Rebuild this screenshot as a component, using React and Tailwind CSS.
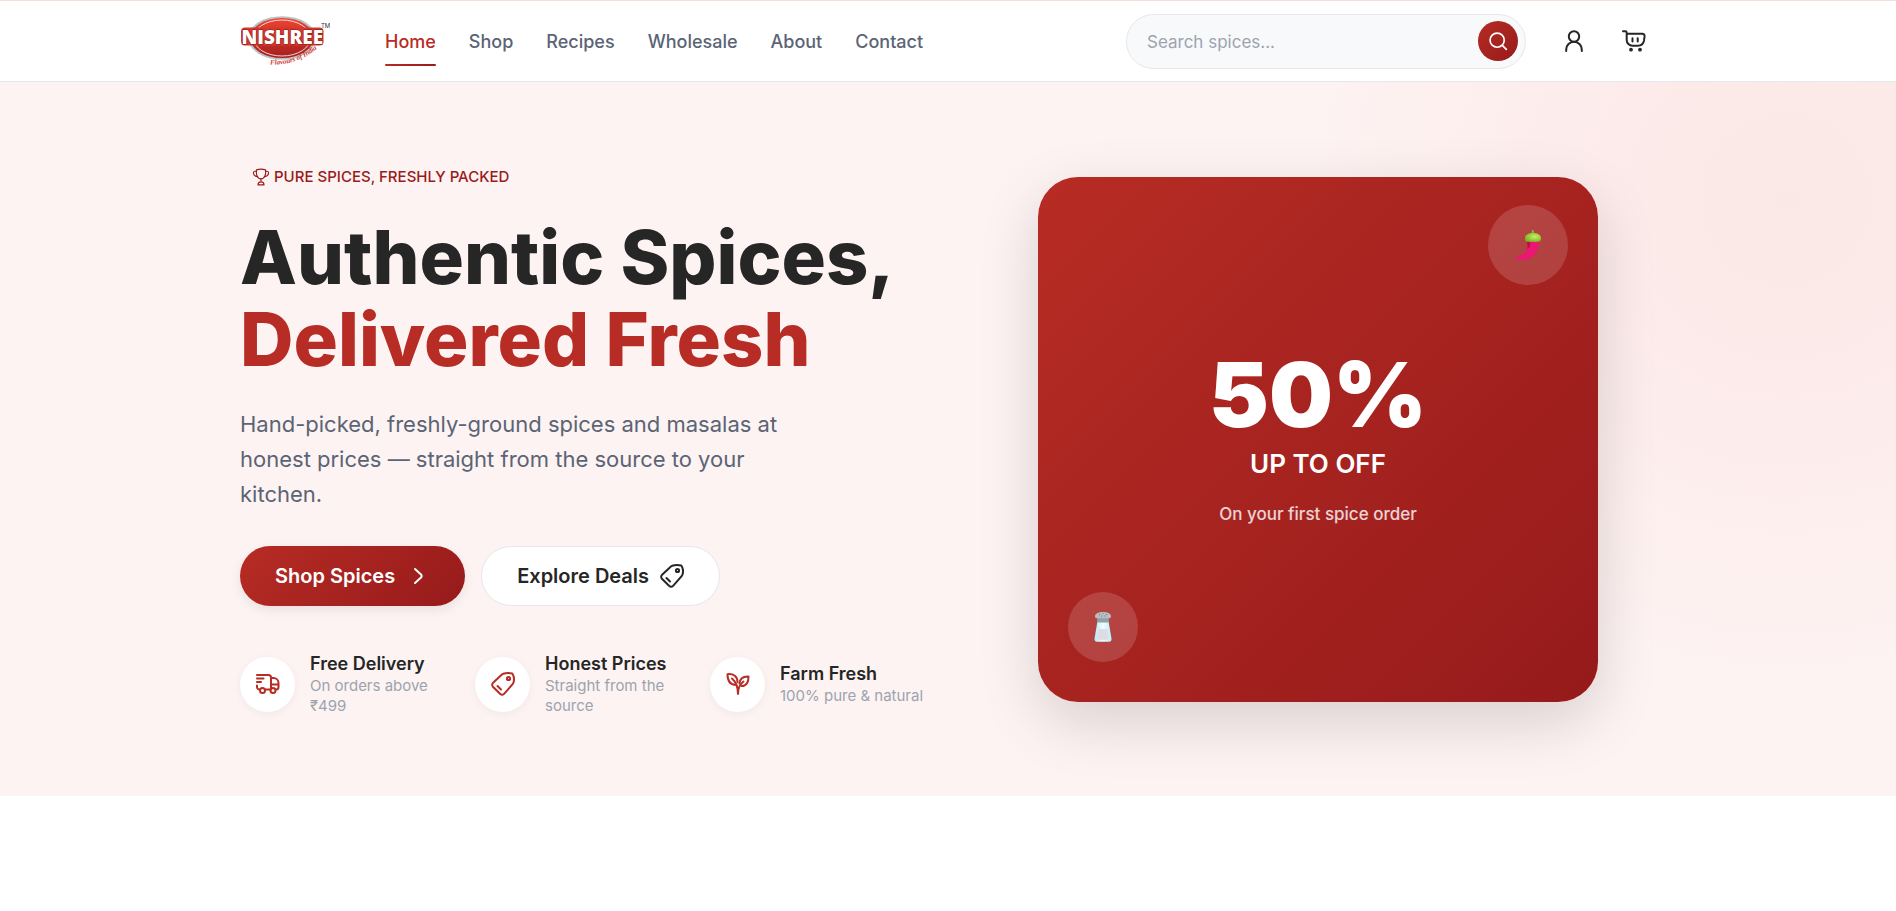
const NAV = ["Home", "Shop", "Recipes", "Wholesale", "About", "Contact"];

function Icon({ children, className, strokeWidth = 2 }) {
  return (
    <svg
      viewBox="0 0 24 24"
      fill="none"
      stroke="currentColor"
      strokeWidth={strokeWidth}
      strokeLinecap="round"
      strokeLinejoin="round"
      className={className}
      aria-hidden="true"
    >
      {children}
    </svg>
  );
}

const TruckIcon = (p) => (
  <Icon {...p}>
    <path d="M1 3h11.500A2.500 2.500 0 0 1 15 5.500V17.500H9.500" />
    <path d="M1 6.500h6.500M1 10h4M1 13.500v1.500a2.500 2.500 0 0 0 2.500 2.500" />
    <path d="M15 6h2.500A5 5 0 0 1 22.500 11v4a2.500 2.500 0 0 1-2.500 2.500M15 12.500h7.500" />
    <circle cx="6.500" cy="18.500" r="2.500" />
    <circle cx="17" cy="18.500" r="2.500" />
  </Icon>
);

const TagIcon = (p) => (
  <Icon {...p}>
    <path d="M12.300 1.800C15 .8 19 1 21.300 1.500 23 4 23.300 8 22.500 10.500c-.2.800-.6 1.300-1.100 1.900L13.300 21.700a2.800 2.800 0 0 1-4 .3L1.900 14.700a2.800 2.800 0 0 1 .2-4L10.400 2.900c.6-.5 1.100-.9 1.900-1.100Z" />
    <circle cx="17.500" cy="6.500" r="1.600" />
    <path d="m6.500 14 3.500 3.500" />
  </Icon>
);

const SproutIcon = (p) => (
  <Icon {...p}>
    <path d="M9.800 12.800C4.500 12.800 1.500 9 1.500 2.200c6-.6 10 2 10 8" />
    <path d="M13.500 11.500c.3-4.500 3.500-7.200 9-7 .2 5.500-2.200 9.500-6.800 9.500" />
    <path d="M6 6.500c3.500 3 6 7 6 15.500 0-5.500 2-10 5.500-12.500" />
  </Icon>
);

const TrophyIcon = (p) => (
  <Icon {...p}>
    <path d="M6 2.500c3-1 9-1 12 0 .8 5-.5 12-6 12s-6.800-7-6-12Z" />
    <path d="M5.800 4.500C3 4 1.500 5 2 7.500c.4 2 2 3.500 5 4M18.200 4.500C21 4 22.500 5 22 7.500c-.4 2-2 3.500-5 4" />
    <path d="M12 14.500v4M8 22.500c0-2.500 1.500-4 4-4s4 1.500 4 4Z" />
  </Icon>
);

const UserIcon = (p) => (
  <Icon {...p}>
    <circle cx="12" cy="7.500" r="5.200" />
    <path d="M4.200 22v-1.500a7.800 7.800 0 0 1 15.600 0V22" />
  </Icon>
);

const CartIcon = (p) => (
  <Icon {...p}>
    <path d="M1 2.300h2.300a1.400 1.400 0 0 1 1.400 1.400V11a5.700 5.700 0 0 0 5.700 5.700h5.300c3.500 0 5.800-1.900 6.300-5l.6-4.500A2.200 2.200 0 0 0 20.400 4.800H4.800" />
    <path d="M10.500 9.300v3.200M15.700 9.300v3.200" />
    <circle cx="9" cy="20.700" r="0.900" fill="currentColor" />
    <circle cx="18" cy="20.700" r="0.900" fill="currentColor" />
  </Icon>
);

const SearchIcon = (p) => (
  <Icon {...p}>
    <circle cx="11" cy="11" r="8.500" />
    <path d="m17.500 17.500 4.500 4.500" />
  </Icon>
);

const ChevronIcon = (p) => (
  <Icon {...p}>
    <path d="m9 5 6 5.500a2 2 0 0 1 0 3L9 19" />
  </Icon>
);

function ChiliIcon({ className }) {
  return (
    <svg viewBox="0 0 25 30" className={className} aria-hidden="true">
      <defs>
        <radialGradient id="cap" cx="0.600" cy="0.400" r="0.600">
          <stop offset="0" stopColor="#c4f266" />
          <stop offset="1" stopColor="#7fb524" />
        </radialGradient>
      </defs>
      <path
        d="M10.500 10.500h12.300c.3 6-1.300 11.500-5.300 15.300C13.500 29.500 7.500 30.300 2 29.300.2 28.900-.1 26 2 25.700 7.500 25.300 11.300 22 11.300 16c0-2-.5-3.800-.8-5.500Z"
        fill="#ec1675"
      />
      <path d="M10.500 11h3.800c.4 3.500-.5 6.300-2.800 8.200.4-3.200-.1-5.600-1-8.200Z" fill="#b5123f" />
      <rect x="15.800" y="0" width="2" height="6" rx="0.800" fill="#86bd2b" />
      <path d="M9 8c0-3 3-5 8-5s8 2 8 5-1 4-3 3.700c-1.500-.3-2 .5-3 .3-1.200-.2-2.500-.2-4 0-1 .2-1.500-.6-3-.3-2 .3-3-.7-3-3.700Z" fill="url(#cap)" />
    </svg>
  );
}

function SaltIcon({ className }) {
  return (
    <svg viewBox="0 0 18 30" className={className} aria-hidden="true">
      <defs>
        <linearGradient id="glass" x1="0" y1="0" x2="1" y2="0">
          <stop offset="0" stopColor="#b3e8f8" />
          <stop offset="0.500" stopColor="#f1fcff" />
          <stop offset="1" stopColor="#b9ecfa" />
        </linearGradient>
      </defs>
      <path d="M3.500 9h11l3 17.500c.3 2-.8 3.300-2.500 3.300H3C1.300 29.800.2 28.500.5 26.500Z" fill="url(#glass)" />
      <path d="M4.500 17h9l1 9c0 1-.5 1.700-1.500 1.700H5c-1 0-1.500-.7-1.500-1.700Z" fill="#dcdce2" />
      <rect x="3.200" y="5" width="11.600" height="5.500" rx="1" fill="#8fa1ab" />
      <path d="M1 4.500C1 1.500 4 0 9 0s8 1.500 8 4.500c0 1.300-1 1.800-2.500 1.800h-11C2 6.300 1 5.800 1 4.500Z" fill="#b9bcc0" />
      <path d="M5 2.500h1M8.500 1.500h1M12 2.500h1M7 4h1M10.500 4h1" stroke="#6f7377" strokeWidth="0.900" />
    </svg>
  );
}

function Logo() {
  return (
    <svg viewBox="0 0 90 54" className="h-[54px] w-[90px]" role="img" aria-label="Nishree, Flavours of India">
      <defs>
        <linearGradient id="oval" x1="0" y1="0" x2="0" y2="1">
          <stop offset="0" stopColor="#ee4332" />
          <stop offset="1" stopColor="#a51f1f" />
        </linearGradient>
        <path id="arc" d="M30 50.500Q58 52 80 32" />
      </defs>
      <ellipse cx="42" cy="24" rx="34" ry="21.800" fill="#b9c2c6" />
      <ellipse cx="42" cy="24" rx="31.500" ry="20" fill="url(#oval)" />
      <ellipse cx="42" cy="24" rx="28.500" ry="18" fill="none" stroke="#fff" strokeWidth="0.800" />
      <rect x="1" y="13.500" width="82.500" height="18" rx="4" fill="#d5372b" />
      <text
        x="42.300"
        y="29.500"
        textAnchor="middle"
        fontFamily="'Open Sans', sans-serif"
        fontWeight="800"
        fontSize="19"
        fill="#fff"
        stroke="#7c1b18"
        strokeWidth="1"
        paintOrder="stroke"
      >
        NISHREE
      </text>
      <text x="81" y="13.500" fontFamily="Inter, sans-serif" fontSize="6" fill="#333">
        TM
      </text>
      <text fontFamily="'Liberation Serif', serif" fontStyle="italic" fontWeight="700" fontSize="7" fill="#d2352b">
        <textPath href="#arc">Flavours of India</textPath>
      </text>
    </svg>
  );
}

function Header() {
  return (
    <header className="border-t border-b border-t-[#f8ddd8] border-b-[#e5e7eb] bg-white">
      <div className="mx-auto flex h-20 max-w-[1440px] items-center px-3">
        <a href="#home" className="mr-[55px] block">
          <Logo />
        </a>
        <nav className="flex items-center gap-[33px]">
          {NAV.map((n, i) => (
            <a
              key={n}
              href="#"
              className={
                i === 0
                  ? "relative pt-3.5 pb-3 text-[18px] leading-6 font-medium text-[#b72c24]"
                  : "pt-3.5 pb-3 text-[18px] leading-6 font-medium text-[#5b6475]"
              }
            >
              {n}
              {i === 0 && (
                <span className="absolute inset-x-0 bottom-0 h-0.5 rounded-full bg-linear-to-r from-[#b72c24] to-[#991b1b]" />
              )}
            </a>
          ))}
        </nav>
        <form
          className="ml-auto flex h-[55px] w-[400px] items-center rounded-full border border-[#e5e7eb] bg-[#f8f9fb] pr-[7px] pl-5"
          onSubmit={(e) => e.preventDefault()}
        >
          <input
            type="search"
            aria-label="Search spices"
            placeholder="Search spices..."
            className="min-w-0 flex-1 bg-transparent pt-0.5 text-[17px] leading-6 outline-none placeholder:text-[#9ca3af]"
          />
          <button
            type="submit"
            aria-label="Search"
            className="flex size-10 items-center justify-center rounded-full bg-linear-135 from-[#b72c24] to-[#961a1b] text-white"
          >
            <SearchIcon className="size-5" />
          </button>
        </form>
        <div className="ml-[26px] flex gap-4 text-[#262626]">
          <button type="button" aria-label="Account" className="flex size-11 items-center justify-center">
            <UserIcon className="size-6" />
          </button>
          <button type="button" aria-label="Cart" className="flex size-11 items-center justify-center">
            <CartIcon className="size-6" />
          </button>
        </div>
      </div>
    </header>
  );
}

const BENEFITS = [
  { icon: TruckIcon, title: "Free Delivery", text: "On orders above ₹499" },
  { icon: TagIcon, title: "Honest Prices", text: "Straight from the source" },
  { icon: SproutIcon, title: "Farm Fresh", text: "100% pure & natural" },
];

function Hero() {
  return (
    <section className="relative overflow-hidden bg-[#fdf3f2]">
      <div className="absolute -top-[382px] -right-[390px] size-[1000px] bg-[radial-gradient(circle_480px,rgba(195,55,25,0.055)_0%,rgba(230,50,45,0.045)_35%,transparent_100%)]" />
      <div className="relative mx-auto grid max-w-[1440px] grid-cols-[minmax(0,1fr)_676px] items-center gap-[60px] px-3 py-20">
        <div>
          <p className="flex h-[30px] items-center gap-1 px-3 text-[15px] leading-5 font-medium text-[#991b1b] uppercase">
            <TrophyIcon className="size-[18px]" strokeWidth={1.5} />
            Pure spices, freshly packed
          </p>
          <h1 className="mt-6 text-[74px] leading-[82px] font-extrabold text-[#262626]">
            <span className="block">Authentic Spices,</span>
            <span className="block text-[#b72c24]">Delivered Fresh</span>
          </h1>
          <p className="mt-[27px] max-w-[560px] text-[22px] leading-[35px] text-[#5b6475]">
            Hand-picked, freshly-ground spices and masalas at honest prices — straight from the source to your kitchen.
          </p>
          <div className="mt-[34px] flex gap-4">
            <a
              href="#shop"
              className="flex h-[60px] items-center gap-[11px] rounded-full bg-linear-135 from-[#b72c24] to-[#961a1b] px-[35px] text-[20px] font-semibold text-white shadow-[0_4px_12px_rgba(0,0,0,0.08)]"
            >
              Shop Spices
              <ChevronIcon className="size-6" />
            </a>
            <a
              href="#deals"
              className="flex h-[60px] items-center gap-[11px] rounded-full border border-[#e5e7eb] bg-white px-[35px] text-[20px] font-semibold text-[#262626]"
            >
              Explore Deals
              <TagIcon className="size-6" />
            </a>
          </div>
          <ul className="mt-[46px] grid grid-cols-[211px_211px_max-content] gap-6">
            {BENEFITS.map((b) => (
              <li key={b.title} className="flex items-center gap-[15px]">
                <span className="flex size-[55px] shrink-0 items-center justify-center rounded-full bg-white text-[#b72c24] shadow-[0_2px_8px_rgba(0,0,0,0.05)]">
                  <b.icon className="size-6" />
                </span>
                <div>
                  <h2 className="text-[18px] leading-6 font-semibold text-[#262626]">{b.title}</h2>
                  <p className="text-[15px] leading-5 text-[#9ca3af]">{b.text}</p>
                </div>
              </li>
            ))}
          </ul>
        </div>
        <div className="relative mx-auto flex h-[525px] w-[560px] flex-col items-center justify-center rounded-[40px] bg-linear-135 from-[#b72c24] to-[#961a1b] text-white shadow-[0_20px_60px_rgba(0,0,0,0.15)]">
          <span className="absolute top-7 right-[30px] flex size-20 items-center justify-center rounded-full bg-white/15">
            <ChiliIcon className="h-[30px] w-[25px]" />
          </span>
          <span className="absolute bottom-10 left-[30px] flex size-[70px] items-center justify-center rounded-full bg-white/15">
            <SaltIcon className="h-[30px] w-[18px]" />
          </span>
          <p className="text-[90px] leading-[90px] font-black">50%</p>
          <p className="mt-2 text-[26px] leading-8 font-semibold">UP TO OFF</p>
          <p className="mt-5 text-[17px] leading-7 font-medium text-white/80">On your first spice order</p>
        </div>
      </div>
    </section>
  );
}

export default function App() {
  return (
    <div className="min-h-screen bg-white font-['Inter',sans-serif]">
      <Header />
      <main>
        <Hero />
      </main>
    </div>
  );
}
